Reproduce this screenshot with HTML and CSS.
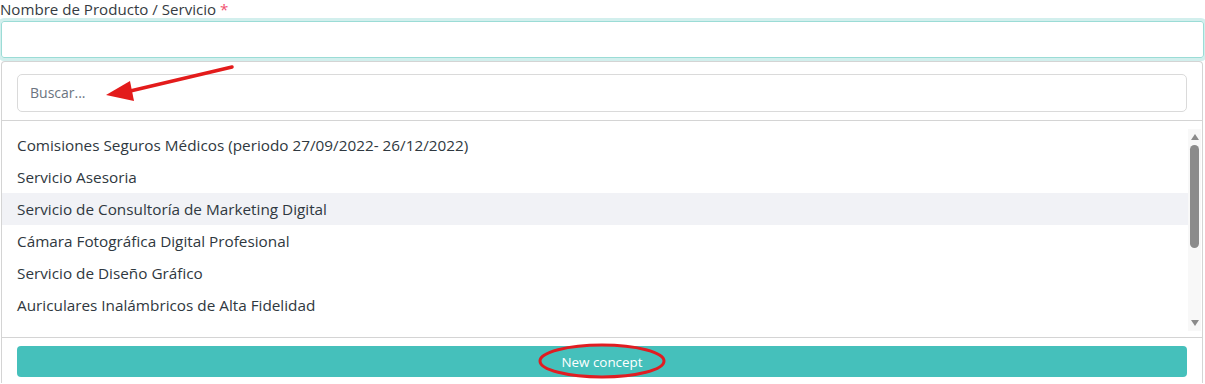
FILE: index.html
```html
<!DOCTYPE html>
<html lang="es">
  <head>
    <meta charset="UTF-8" />
    <meta name="viewport" content="width=device-width, initial-scale=1.0" />
    <title>Nombre de Producto / Servicio</title>
    <link rel="stylesheet" href="styles.css">
  </head>
  <body>
    <div class="field">
      <label class="field-label">Nombre de Producto / Servicio <span class="req">*</span></label>
      <div class="field-input"></div>

      <div class="dropdown">
        <div class="search-wrap">
          <div class="search">Buscar...</div>
        </div>

        <div class="list-wrap">
          <ul class="list">
            <li>Comisiones Seguros Médicos (periodo 27/09/2022- 26/12/2022)</li>
            <li>Servicio Asesoria</li>
            <li class="active">Servicio de Consultoría de Marketing Digital</li>
            <li>Cámara Fotográfica Digital Profesional</li>
            <li>Servicio de Diseño Gráfico</li>
            <li>Auriculares Inalámbricos de Alta Fidelidad</li>
          </ul>
          <div class="scrollbar">
            <span class="arrow up"></span>
            <span class="thumb"></span>
            <span class="grow"></span>
            <span class="arrow down"></span>
          </div>
        </div>

        <div class="footer">
          <button class="new-btn">New concept</button>
        </div>
      </div>
    </div>

    <!-- annotations drawn over the screenshot -->
    <svg class="mark-arrow" width="140" height="40" viewBox="0 0 140 40">
      <line x1="128" y1="4" x2="22" y2="29" stroke="#e31b1b" stroke-width="3.5" stroke-linecap="round" />
      <polygon points="2,32 26,18 30,38" fill="#e31b1b" />
    </svg>
    <svg class="mark-ring" width="134" height="40" viewBox="0 0 134 40">
      <ellipse cx="67" cy="20" rx="62" ry="16" fill="none" stroke="#e01d22" stroke-width="3" />
    </svg>
  </body>
</html>
```

FILE: styles.css
```css
* {
  box-sizing: border-box;
}

body {
  margin: 0;
  background: #fff;
  font-family: "Open Sans", "Liberation Sans", sans-serif;
  color: #343a40;
  overflow: hidden;
}

.field {
  width: 1205px;
}

.field-label {
  display: block;
  height: 18px;
  font-size: 15.1px;
  line-height: 18px;
  color: #353b42;
}

.req {
  color: #f0506e;
}

.field-input {
  height: 37px;
  margin: 3px 1px 0 1px;
  border: 1px solid #9bdcd6;
  border-radius: 3px;
  box-shadow: 0 0 0 3px #d2efed;
}

.dropdown {
  margin: 3px 2px 0 1px;
  border: 1px solid #d4d4d4;
  border-bottom: none;
  border-radius: 4px 4px 0 0;
}

.search-wrap {
  padding: 12px 15px 8px 15px;
  border-bottom: 1px solid #d4d4d4;
}

.search {
  height: 38px;
  padding: 0 12px;
  border: 1px solid #dadada;
  border-radius: 5px;
  font-size: 14px;
  line-height: 36px;
  color: #6b7480;
}

.list-wrap {
  display: flex;
  height: 216px;
}

.list {
  flex: 1;
  list-style: none;
  margin: 0;
  padding: 8px 0 0 0;
  overflow: hidden;
}

.list li {
  height: 32px;
  padding-left: 15px;
  font-size: 15.3px;
  line-height: 33px;
  color: #2f3840;
  white-space: nowrap;
}

.list li.active {
  background: #f1f2f6;
}

.scrollbar {
  width: 13px;
  margin: 8px 1px 6px 0;
  background: #f8f8f8;
  display: flex;
  flex-direction: column;
  align-items: center;
}

.arrow {
  width: 0;
  height: 0;
  border-left: 4.5px solid transparent;
  border-right: 4.5px solid transparent;
}

.arrow.up {
  margin-top: 5px;
  border-bottom: 6px solid #8b8b8b;
}

.arrow.down {
  margin-bottom: 5px;
  border-top: 6px solid #8b8b8b;
}

.thumb {
  width: 9px;
  height: 103px;
  margin-top: 5px;
  border-radius: 5px;
  background: #8b8b8b;
}

.grow {
  flex: 1;
}

.footer {
  border-top: 1px solid #d4d4d4;
  padding: 8px 15px 6px 15px;
}

.new-btn {
  display: block;
  width: 100%;
  height: 31px;
  border: none;
  border-radius: 4px;
  background: #45c0bb;
  color: #fff;
  font-family: inherit;
  font-size: 13.4px;
}

.mark-arrow {
  position: absolute;
  left: 104px;
  top: 63px;
}

.mark-ring {
  position: absolute;
  left: 535px;
  top: 341px;
}
```
